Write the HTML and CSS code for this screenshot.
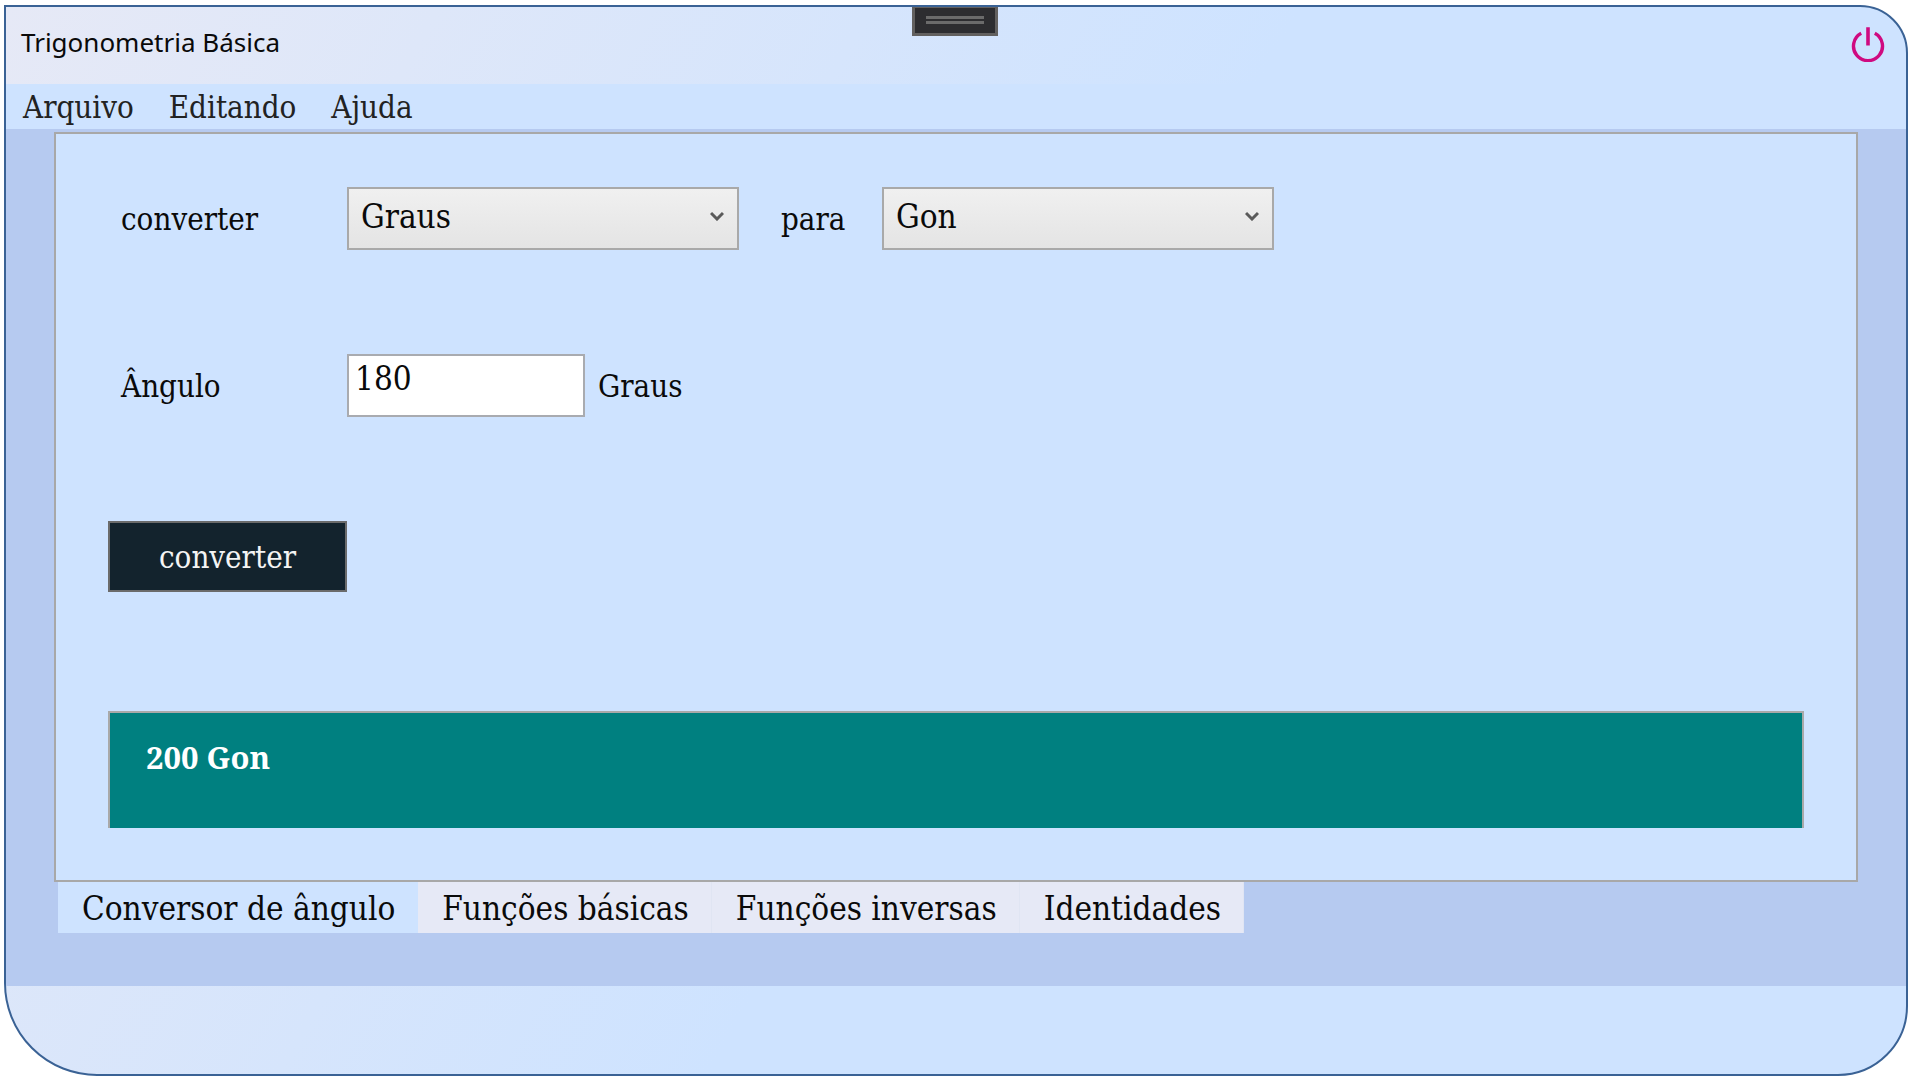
FILE: index.html
```html
<!DOCTYPE html>
<html lang="pt-BR">
<head>
<meta charset="utf-8">
<meta name="viewport" content="width=device-width, initial-scale=1">
<title>Trigonometria Básica</title>
<link rel="stylesheet" href="styles.css">
</head>
<body>
<div class="window">
  <header class="titlebar">
    <h1 class="title">Trigonometria Básica</h1>
    <button class="power" type="button" aria-label="Fechar">
      <svg viewBox="0 0 34 36" width="34" height="36" fill="none" stroke="#cf0a80">
        <path d="M10.200 7.300A14.500 14.500 0 1 0 23.800 7.300" stroke-width="3.400"/>
        <path d="M17 1.300V19.600" stroke-width="3.600"/>
      </svg>
    </button>
  </header>
  <nav class="menu">
    <button class="menu-item" type="button">Arquivo</button>
    <button class="menu-item" type="button">Editando</button>
    <button class="menu-item" type="button">Ajuda</button>
  </nav>
  <main class="content">
    <form class="panel">
      <div class="row">
        <label class="lead" for="from">converter</label>
        <span class="combo">
          <select id="from"><option>Graus</option><option>Radianos</option><option>Gon</option></select>
          <svg class="chevron" viewBox="0 0 14 10" width="14" height="10"><path d="M1 2L7 8L13 2" fill="none" stroke="#5a5a5a" stroke-width="3"/></svg>
        </span>
        <label class="mid" for="to">para</label>
        <span class="combo">
          <select id="to"><option>Gon</option><option>Graus</option><option>Radianos</option></select>
          <svg class="chevron" viewBox="0 0 14 10" width="14" height="10"><path d="M1 2L7 8L13 2" fill="none" stroke="#5a5a5a" stroke-width="3"/></svg>
        </span>
      </div>
      <div class="row">
        <label class="lead" for="angle">Ângulo</label>
        <input class="angle" id="angle" type="text" value="180">
        <span class="unit">Graus</span>
      </div>
      <button class="convert" type="button">converter</button>
      <output class="result" for="from to angle">200 Gon</output>
    </form>
    <div class="tabs" role="tablist">
      <button class="tab active" type="button" role="tab" aria-selected="true">Conversor de ângulo</button>
      <button class="tab" type="button" role="tab">Funções básicas</button>
      <button class="tab" type="button" role="tab">Funções inversas</button>
      <button class="tab" type="button" role="tab">Identidades</button>
    </div>
  </main>
  <footer class="footer"></footer>
  <div class="grip"></div>
</div>
</body>
</html>
```
FILE: styles.css
```css
* { box-sizing: border-box; }

body {
  margin: 0;
  min-height: 100vh;
  display: flex;
  padding: 5px 3px 4px 4px;
  background: #fff;
  color: #0a0a0a;
  font-family: "DejaVu Serif Condensed", "Noto Serif", Cambria, serif;
  font-size: 31px;
  line-height: 36px;
}

button, select, input { font: inherit; color: inherit; margin: 0; border-radius: 0; }
button { border: 0; background: none; padding: 0; cursor: pointer; }

.window {
  position: relative;
  flex: 1;
  display: flex;
  flex-direction: column;
  overflow: hidden;
  border: 2px solid #3a6295;
  border-radius: 0 48px 70px 93px;
  background: linear-gradient(119deg, #e6e9f6, #cee3ff 52%);
}

.titlebar {
  display: flex;
  justify-content: space-between;
  align-items: flex-start;
  padding: 17px 21px 17px 15px;
}
.title {
  margin: 0;
  font: 400 26px/36px "Noto Sans", "Open Sans", sans-serif;
}
.power { display: flex; padding-top: 2px; height: 43px; }

.menu {
  display: flex;
  gap: 35px;
  height: 45px;
  padding: 0 17px;
  background: #cee3ff;
  color: #222;
}

.content { flex: 1; padding: 3px 48px 53px; background: #b6caf0; }

.panel {
  display: flex;
  flex-direction: column;
  align-items: flex-start;
  padding: 53px 52px 52px;
  border: 2px solid #a8a8a8;
  background: #cee3ff;
}
.row { display: flex; align-items: center; margin-bottom: 104px; }
.lead { width: 239px; padding-left: 13px; }
.mid { width: 143px; padding-left: 42px; }
.unit { padding-left: 13px; }

.combo { position: relative; display: flex; }
.combo select {
  appearance: none;
  width: 392px;
  height: 63px;
  padding: 0 12px 3px;
  border: 2px solid #a9a9a9;
  background: linear-gradient(#f0f0f0, #e4e4e4);
  font-size: 33px;
}
.chevron { position: absolute; right: 15px; top: 24px; }

.angle {
  width: 238px;
  height: 63px;
  padding: 0 6px 14px;
  border: 2px solid #a9abb0;
  background: #fff;
  font-size: 33px;
}
.convert {
  width: 239px;
  height: 71px;
  border: 2px solid #6b6b6b;
  background: #13232d;
  color: #f4f4f4;
}
.result {
  align-self: stretch;
  margin-top: 119px;
  padding: 26px 36px 53px;
  border: 2px solid #a9a9a9;
  border-bottom: 0;
  background: #008080;
  color: #fff;
  font-family: "Noto Serif", "DejaVu Serif Condensed", serif;
  font-weight: 700;
}

.tabs { display: flex; padding-left: 4px; }
.tab {
  height: 51px;
  padding: 3px 22px 0 24px;
  border-right: 1px solid #e0e5f3;
  background: #e6e9f6;
  font-size: 33px;
}
.tab.active { border-color: #cee3ff; background: #cee3ff; }

.footer { height: 88px; }

.grip {
  position: absolute;
  top: -2px;
  left: 50%;
  width: 86px;
  height: 31px;
  margin-left: -44px;
  border: 3px solid #62605f;
  background:
    linear-gradient(#6b6b6b, #6b6b6b) center 8px / 58px 3px no-repeat,
    linear-gradient(#6b6b6b, #6b6b6b) center 13px / 58px 3px no-repeat,
    #2d2d30;
}
```
